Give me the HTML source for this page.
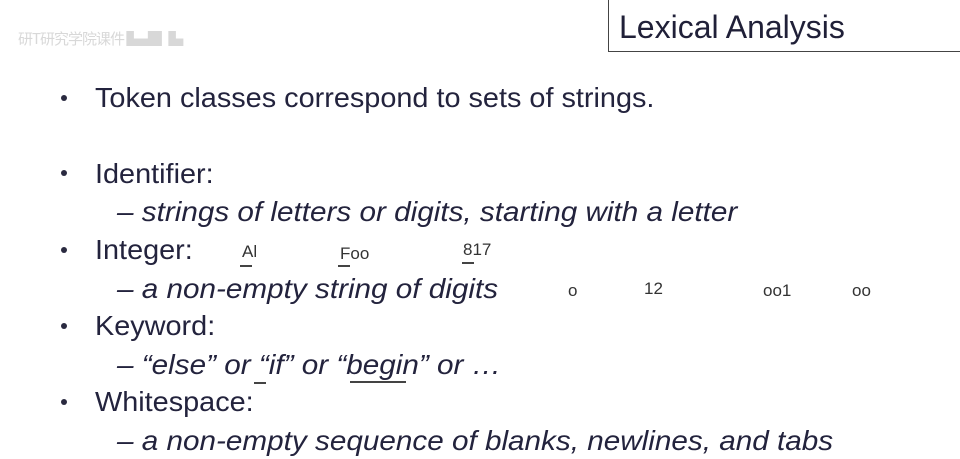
<!DOCTYPE html>
<html><head><meta charset="utf-8"><style>
body{margin:0;width:960px;height:459px;background:#fff;overflow:hidden;position:relative;font-family:"Liberation Sans",sans-serif;color:#23233d}
.l{position:absolute;white-space:nowrap;font-size:28px;transform:scaleX(1.03);transform-origin:0 0;line-height:32px}
.i{font-style:italic;transform:scaleX(1.06)}
.b{position:absolute;width:6px;height:6px;border-radius:50%;background:#2a2a40}
.box{position:absolute;left:608px;top:-2px;width:360px;height:54px;border:1.5px solid #444;box-sizing:border-box}
.t{position:absolute;left:619px;top:9px;font-size:32px;transform:scaleX(1.0);transform-origin:0 0;white-space:nowrap;color:#202038}
.wm{position:absolute;left:18px;top:28px;font-size:15px;color:#d8d8d8;font-family:"Noto Sans CJK SC",sans-serif;letter-spacing:-1px}
.h{position:absolute;font-size:17px;color:#333;font-family:"Liberation Sans",sans-serif}
.u{position:absolute;height:2px;background:#444}
</style></head><body>
<div class="wm">研T研究学院课件 ▙▟▌▙</div>
<div class="box"></div>
<div class="t">Lexical Analysis</div>

<div class="b" style="left:61px;top:95px"></div>
<div class="l" style="left:95px;top:82px">Token classes correspond to sets of strings.</div>

<div class="b" style="left:61px;top:170px"></div>
<div class="l" style="left:95px;top:158px">Identifier:</div>
<div class="l i" style="left:117px;top:196px">– strings of letters or digits, starting with a letter</div>

<div class="b" style="left:61px;top:247px"></div>
<div class="l" style="left:95px;top:234px">Integer:</div>
<div class="l i" style="left:117px;top:273px">– a non-empty string of digits</div>

<div class="b" style="left:61px;top:323px"></div>
<div class="l" style="left:95px;top:310px">Keyword:</div>
<div class="l i" style="left:117px;top:349px">– “else” or “if” or “begin” or …</div>

<div class="b" style="left:61px;top:399px"></div>
<div class="l" style="left:95px;top:386px">Whitespace:</div>
<div class="l i" style="left:117px;top:425px">– a non-empty sequence of blanks, newlines, and tabs</div>

<div class="h" style="left:242px;top:242px">Al</div>
<div class="h" style="left:340px;top:244px">Foo</div>
<div class="h" style="left:463px;top:240px">817</div>
<div class="u" style="left:240px;top:265px;width:12px"></div>
<div class="u" style="left:338px;top:265px;width:12px"></div>
<div class="u" style="left:462px;top:262px;width:12px"></div>
<div class="h" style="left:568px;top:281px">o</div>
<div class="h" style="left:644px;top:279px">12</div>
<div class="h" style="left:763px;top:281px">oo1</div>
<div class="h" style="left:852px;top:281px">oo</div>
<div class="u" style="left:254px;top:382px;width:12px"></div>
<div class="u" style="left:350px;top:381px;width:56px"></div>
</body></html>
